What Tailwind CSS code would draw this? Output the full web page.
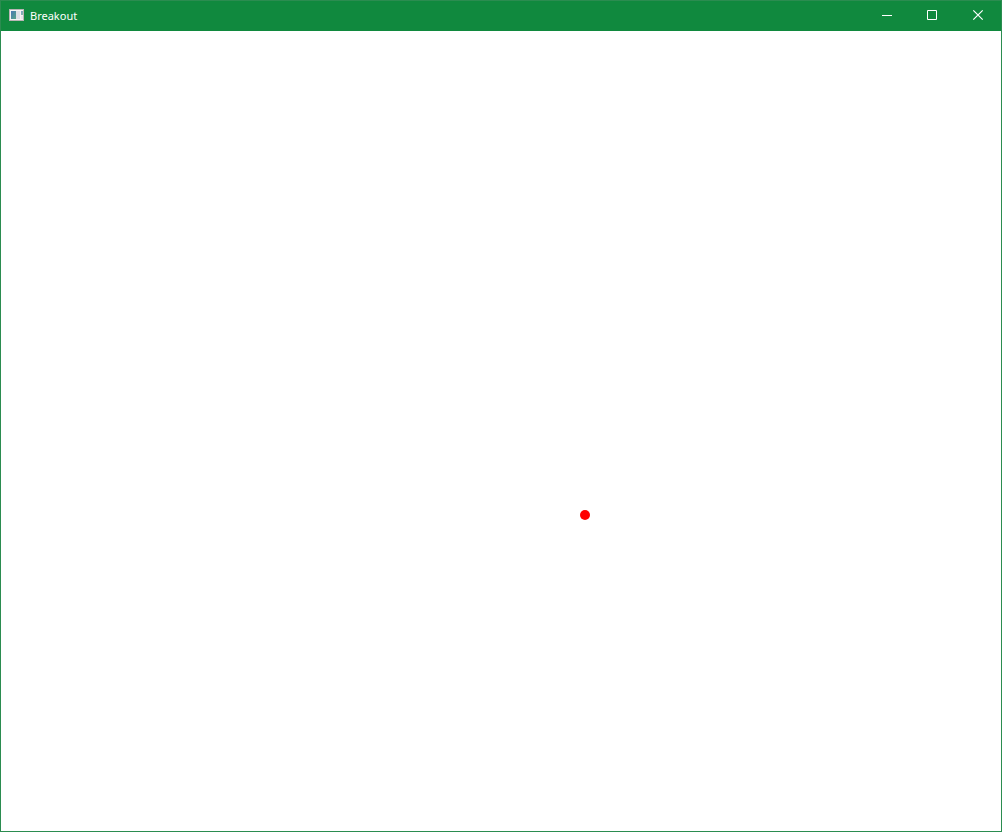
<!DOCTYPE html>
<html lang="en">

<head>
    <meta charset="UTF-8">
    <meta name="viewport" content="width=device-width, initial-scale=1.0">
    <script src="https://cdn.jsdelivr.net/npm/@tailwindcss/browser@4"></script>
    <title>Breakout</title>
</head>

<body>

    <div class="flex flex-col h-screen bg-white border border-[#2b8c50]">
        <header class="flex items-center h-[30px] pb-0.5 shrink-0 bg-[#10893e] text-white">
            <div class="flex items-center flex-1 gap-1.5 pl-2">
                <svg class="w-[15px] h-3.5" viewBox="0 0 15 14" shape-rendering="crispEdges" aria-hidden="true">
                    <defs>
                        <linearGradient id="pane" x1="0" y1="0" x2="1" y2="1">
                            <stop offset="0" stop-color="#4a78b4" />
                            <stop offset="1" stop-color="#57a487" />
                        </linearGradient>
                    </defs>
                    <rect y="1" width="15" height="12" fill="#b9b5b5" />
                    <rect x="1" y="2" width="13" height="10" fill="#f4f3f3" />
                    <rect x="2" y="3" width="5" height="8" fill="url(#pane)" />
                    <rect x="7" y="3" width="4" height="8" fill="#dedfe6" />
                    <rect x="12" y="3" width="2" height="4" fill="url(#pane)" opacity="0.7" />
                    <rect x="12" y="8" width="2" height="3" fill="#e6e6ea" />
                </svg>
                <h1 class="pt-0.5 font-['Noto_Sans',sans-serif] text-[11px] leading-4">Breakout</h1>
            </div>
            <button aria-label="Minimize" class="flex items-center justify-center w-[46px] h-full hover:bg-white/10">
                <svg class="w-3 h-3" viewBox="0 0 12 12" stroke="currentColor" fill="none">
                    <path d="M2 6.5H12" />
                </svg>
            </button>
            <button aria-label="Maximize" class="flex items-center justify-center w-[46px] h-full hover:bg-white/10">
                <svg class="w-3 h-3" viewBox="0 0 12 12" stroke="currentColor" fill="none">
                    <path d="M1.500 1.500H10.500V10.500H1.500Z" />
                </svg>
            </button>
            <button aria-label="Close" class="flex items-center justify-center w-[46px] h-full hover:bg-red-600">
                <svg class="w-3 h-3" viewBox="0 0 12 12" stroke="currentColor" fill="none">
                    <path d="M1.300 1.300L10.700 10.700M10.700 1.300L1.300 10.700" stroke-width="1.2" />
                </svg>
            </button>
        </header>

        <!-- playing field -->
        <main class="relative flex-1 overflow-hidden">
            <div class="absolute left-[579px] top-[479px] size-2.5 rounded-full bg-[#ff0000]"></div>
        </main>
    </div>

</body>

</html>
